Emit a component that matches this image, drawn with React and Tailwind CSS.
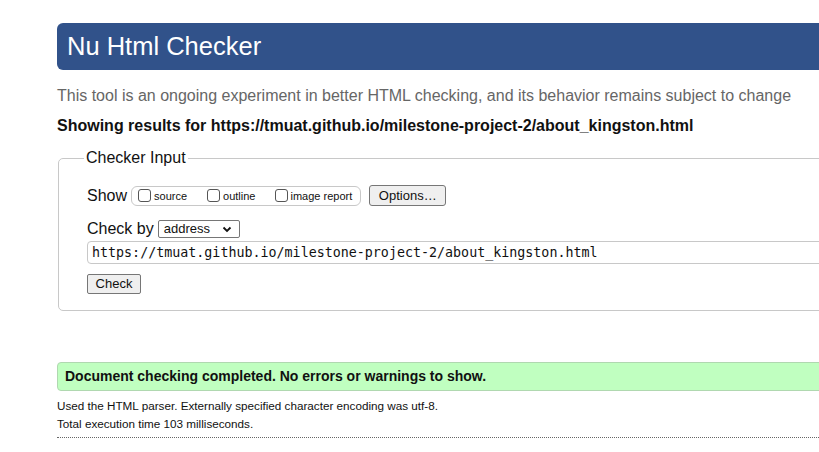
export default function App() {
  const sans = { fontFamily: '"Liberation Sans", Arial, sans-serif' };
  return (
    <div className="w-[819px] h-[452px] overflow-hidden bg-white" style={sans}>
      <div className="ml-[57px] w-[900px] pt-[23px]">
        <h1 className="h-[47px] bg-[#31528a] rounded-l-[6px] rounded-r-[6px] pl-[10px] flex items-center text-white text-[25.5px] leading-none">
          Nu Html Checker
        </h1>
        <p className="mt-[17px] text-[16px] leading-[18px] text-[#666]">
          This tool is an ongoing experiment in better HTML checking, and its behavior remains subject to change
        </p>
        <p className="mt-[12px] text-[16px] leading-[18px] font-bold text-[#111]">
          Showing results for https://tmuat.github.io/milestone-project-2/about_kingston.html
        </p>
        <fieldset className="mt-[14px] ml-[1px] border border-[#c8c8c8] rounded-[5px] pl-[28px] pr-[10px] pb-[16px] pt-[18px] leading-[18px]">
          <legend className="-ml-[3px] px-[2px] text-[16px] text-[#111] leading-[18px]">Checker Input</legend>
          <div className="h-[21px] flex items-center">
            <span className="text-[16px] text-[#111]">Show</span>
            <div className="ml-[4px] h-[20px] flex items-center border border-[#c8c8c8] rounded-[6px] pl-[6px] pr-[8px] text-[11px] text-[#111]">
              <span className="w-[13px] h-[13px] border border-[#555] rounded-[3px] bg-white"></span>
              <span className="ml-[3px]">source</span>
              <span className="ml-[20px] w-[13px] h-[13px] border border-[#555] rounded-[3px] bg-white"></span>
              <span className="ml-[3px]">outline</span>
              <span className="ml-[20px] w-[13px] h-[13px] border border-[#555] rounded-[3px] bg-white"></span>
              <span className="ml-[2px]">image report</span>
            </div>
            <button className="ml-[8px] h-[21px] w-[77px] border border-[#767676] rounded-[3px] bg-[#efefef] text-[13px] text-[#111] flex items-center justify-center">
              Options…
            </button>
          </div>
          <div className="mt-[14px] h-[18px] flex items-center">
            <span className="text-[16px] text-[#111]">Check by</span>
            <div className="ml-[4px] h-[18px] w-[82px] border border-[#767676] rounded-[2px] bg-white flex items-center justify-between px-[5px] text-[13px] text-[#111]">
              <span>address</span>
              <svg width="10" height="7" viewBox="0 0 10 7" className="mr-[2px]">
                <path d="M1.5 1.5 L5 5 L8.5 1.5" fill="none" stroke="#111" strokeWidth="1.8" />
              </svg>
            </div>
          </div>
          <div
            className="mt-[3px] h-[23px] border border-[#c8c8c8] rounded-[4px] flex items-center pl-[4px] text-[13.33px] text-[#111]"
            style={{ fontFamily: '"DejaVu Sans Mono", monospace' }}
          >
            https://tmuat.github.io/milestone-project-2/about_kingston.html
          </div>
          <button className="mt-[10px] h-[20px] w-[54px] border border-[#767676] rounded-[2px] bg-[#efefef] text-[13px] text-[#111] flex items-center justify-center">
            Check
          </button>
        </fieldset>
        <div className="mt-[51px] h-[29px] bg-[#c0ffc0] border border-[#b0d8b0] rounded-[4px] flex items-center pl-[7px] text-[14px] font-bold text-[#111]">
          Document checking completed. No errors or warnings to show.
        </div>
        <p className="mt-[8px] text-[11.7px] leading-[13px] text-[#111]">
          Used the HTML parser. Externally specified character encoding was utf-8.
        </p>
        <p className="mt-[5px] text-[11.7px] leading-[13px] text-[#111]">Total execution time 103 milliseconds.</p>
        <div className="mt-[7px] border-t border-dotted border-[#666]"></div>
      </div>
    </div>
  );
}
